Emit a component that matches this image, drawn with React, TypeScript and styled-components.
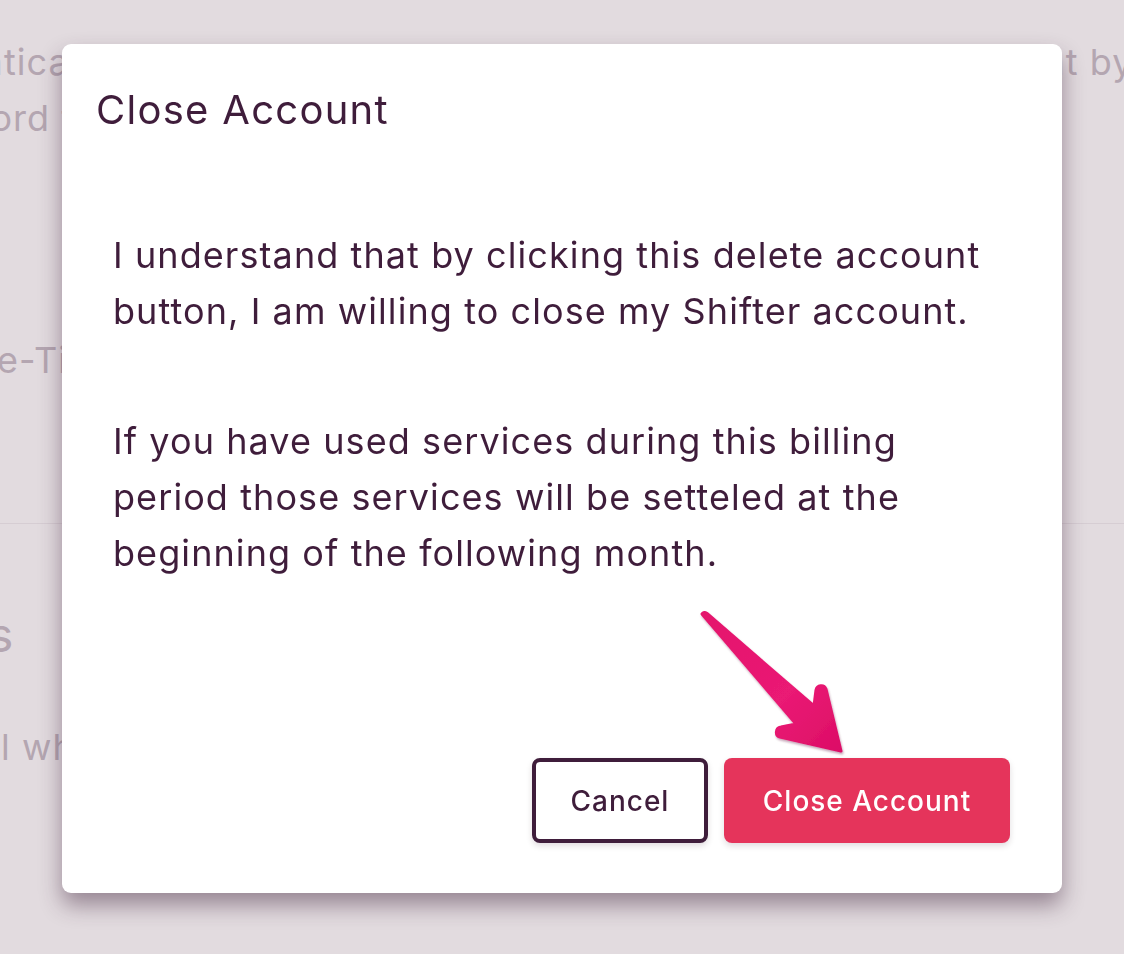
import React from "react";
import styled, { createGlobalStyle } from "styled-components";

const GlobalStyle = createGlobalStyle`
  * { box-sizing: border-box; }
  html, body { margin: 0; padding: 0; }
  body {
    width: 1124px;
    height: 954px;
    overflow: hidden;
    background: #e2dbdf;
    font-family: Inter, "Noto Sans", sans-serif;
    -webkit-font-smoothing: antialiased;
  }
`;

const ArrowIcon = () => (
  <svg width="150" height="150" viewBox="0 0 150 150">
    <defs>
      <linearGradient id="arrowFill" x1="0" y1="0" x2="1" y2="1">
        <stop offset="0" stopColor="#e4126c" />
        <stop offset="0.6" stopColor="#ea1a74" />
        <stop offset="1" stopColor="#dc0d66" />
      </linearGradient>
      <filter id="arrowShadow" x="-10%" y="-10%" width="130%" height="130%">
        <feDropShadow dx="1" dy="2" stdDeviation="1.2" floodColor="#5a1030" floodOpacity="0.35" />
      </filter>
    </defs>
    <path
      filter="url(#arrowShadow)"
      fill="url(#arrowFill)"
      strokeLinejoin="round"
      stroke="url(#arrowFill)"
      strokeWidth="3"
      d="M3 4 C4 2 6 2 8 3.5 L115 96 L117 80 C118 75 125 74 127 79 L142 141 L81 127 C76 126 76 118 82 117 L97 114 Z"
    />
  </svg>
);

export default function App() {
  return (
    <>
      <GlobalStyle />
      <Page>
        <GhostLine $shift={-124} $top={34}>
          Authentication adds an extra layer of security to your own account by requiring a code.
        </GhostLine>
        <GhostLine $shift={-125} $top={0}>
          Password to sign in with on every new device you use.
        </GhostLine>
        <GhostLine $shift={-54} $top={186}>
          One-Time Password
        </GhostLine>
        <Divider />
        <GhostHeading $shift={-286}>Notifications</GhostHeading>
        <GhostLine $shift={-121} $top={56}>
          Control which emails you receive and how often.
        </GhostLine>
      </Page>

      <Overlay>
        <ModalBox role="dialog" aria-labelledby="close-title">
          <ModalTitle id="close-title">Close Account</ModalTitle>
          <ModalContents>
            <p>
              I understand that by clicking this delete account
              <br />
              button, I am willing to close my Shifter account.
            </p>
            <p>
              If you have used services during this billing
              <br />
              period those services will be setteled at the
              <br />
              beginning of the following month.
            </p>
          </ModalContents>
          <ModalFooter>
            <Button $variant="outline" $width={176}>
              Cancel
            </Button>
            <DangerWrap>
              <Pointer>
                <ArrowIcon />
              </Pointer>
              <Button $variant="danger" $width={286}>
                Close Account
              </Button>
            </DangerWrap>
          </ModalFooter>
        </ModalBox>
      </Overlay>
    </>
  );
}

const Page = styled.main`
  width: 1124px;
  height: 954px;
  overflow: hidden;
  display: flex;
  flex-direction: column;
  color: #b4a6b1;
  font-size: 36px;
  line-height: 56px;
  letter-spacing: 0.03em;
`;

const GhostLine = styled.p<{ $shift: number; $top: number }>`
  margin: ${({ $top }) => $top}px 0 0 ${({ $shift }) => $shift}px;
  white-space: nowrap;
`;

const GhostHeading = styled.h2<{ $shift: number }>`
  margin: 83px 0 0 ${({ $shift }) => $shift}px;
  font-size: 48px;
  font-weight: 400;
  line-height: 56px;
  white-space: nowrap;
`;

const Divider = styled.hr`
  margin: 135px 0 0;
  border: 0;
  border-top: 1px solid #d6cdd3;
  width: 100%;
`;

const Overlay = styled.div`
  position: fixed;
  inset: 0;
  display: flex;
  justify-content: center;
  align-items: flex-start;
  padding-top: 44px;
`;

const ModalBox = styled.section`
  width: 1000px;
  height: 849px;
  display: flex;
  flex-direction: column;
  background: #ffffff;
  border-radius: 9px;
  box-shadow: 0 12px 22px 0 rgba(60, 30, 55, 0.45);
  color: #3f1d3b;
`;

const ModalTitle = styled.h2`
  margin: 0;
  padding: 40px 34px 0;
  font-size: 40px;
  font-weight: 400;
  line-height: 52px;
  letter-spacing: 0.032em;
`;

const ModalContents = styled.div`
  margin-top: 91px;
  padding: 0 20px 0 51px;
  font-size: 36px;
  line-height: 56px;
  letter-spacing: 0.03em;
  white-space: nowrap;

  p {
    margin: 0;
  }
  p + p {
    margin-top: 74px;
  }
`;

const ModalFooter = styled.div`
  margin-top: auto;
  display: flex;
  justify-content: flex-end;
  align-items: center;
  gap: 16px;
  padding: 0 52px 50px;
`;

const DangerWrap = styled.div`
  position: relative;
`;

const Pointer = styled.div`
  position: absolute;
  left: -25px;
  top: -148px;
  width: 150px;
  height: 150px;
  pointer-events: none;
`;

const Button = styled.button<{ $variant: "outline" | "danger"; $width: number }>`
  display: flex;
  align-items: center;
  justify-content: center;
  width: ${({ $width }) => $width}px;
  height: 85px;
  padding: 0;
  border-radius: 8px;
  font-family: Inter, "Noto Sans", sans-serif;
  font-size: 28px;
  font-weight: 500;
  letter-spacing: 0.035em;
  cursor: pointer;
  box-shadow: 0 3px 6px rgba(40, 10, 30, 0.14);
  ${({ $variant }) =>
    $variant === "danger"
      ? `
    background: #e5345b;
    color: #ffffff;
    border: 0;
  `
      : `
    background: #ffffff;
    color: #3f1d3b;
    border: 4px solid #3f1d3b;
  `}
`;
